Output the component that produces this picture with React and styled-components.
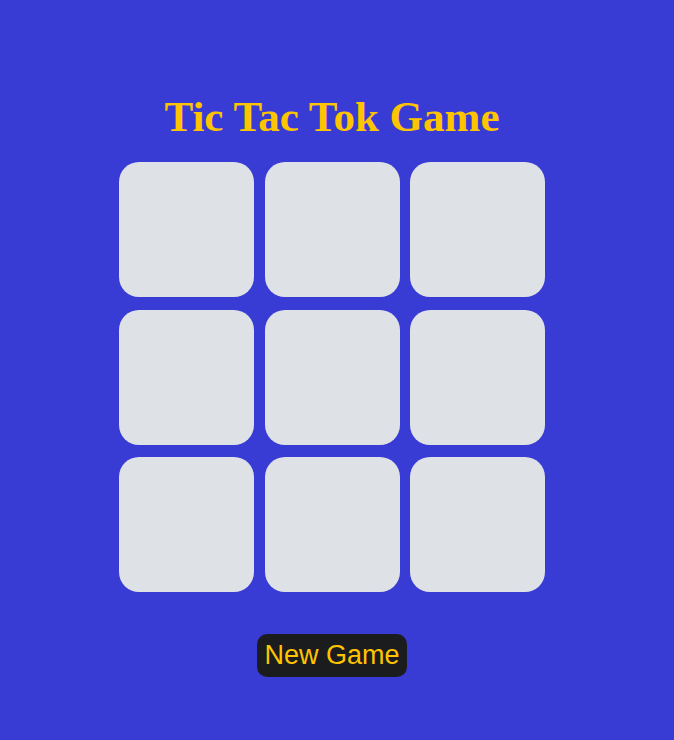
import React from "react";
import styled, { createGlobalStyle } from "styled-components";

const GlobalStyle = createGlobalStyle`
  html, body {
    margin: 0;
    padding: 0;
    background: #383cd5;
  }
`;

const Page = styled.div`
  min-height: 740px;
  background: #383cd5;
  display: flex;
  flex-direction: column;
  align-items: center;
  padding: 89px 10px 0 0;
  box-sizing: border-box;
`;

const Title = styled.h1`
  margin: 0;
  font-family: "Liberation Serif", "Times New Roman", serif;
  font-weight: 700;
  font-size: 43px;
  line-height: 56px;
  color: #ffc400;
`;

const Board = styled.div`
  margin-top: 17px;
  display: grid;
  grid-template-columns: repeat(3, 135px);
  grid-auto-rows: 135px;
  column-gap: 10.5px;
  row-gap: 12.5px;
`;

const Cell = styled.button`
  border: none;
  border-radius: 20px;
  background: #dee1e6;
  padding: 0;
  cursor: pointer;
`;

const NewGameButton = styled.button`
  margin-top: 42px;
  border: none;
  border-radius: 10px;
  background: #1b1c1e;
  color: #ffc400;
  font-family: "Liberation Sans", Arial, sans-serif;
  font-size: 27px;
  line-height: 31px;
  padding: 6px 7px;
  cursor: pointer;
`;

export default function App() {
  const cells = Array(9).fill("");

  return (
    <>
      <GlobalStyle />
      <Page>
        <Title>Tic Tac Tok Game</Title>
        <Board>
          {cells.map((value, i) => (
            <Cell key={i}>{value}</Cell>
          ))}
        </Board>
        <NewGameButton>New Game</NewGameButton>
      </Page>
    </>
  );
}
